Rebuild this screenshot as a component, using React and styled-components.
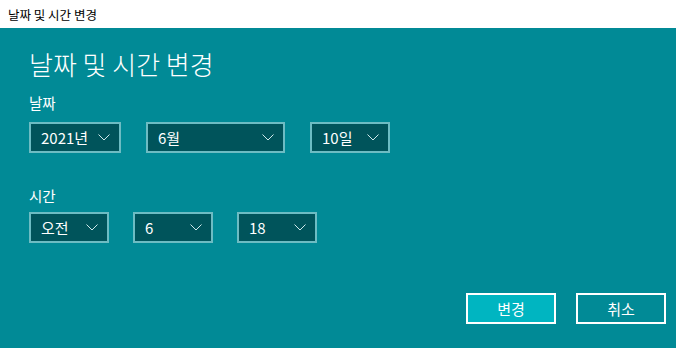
import React from 'react';
import styled, { createGlobalStyle } from 'styled-components';

const Global = createGlobalStyle`
  html, body {
    margin: 0;
    padding: 0;
    width: 676px;
    height: 348px;
    overflow: hidden;
    font-family: "Noto Sans CJK KR", "Noto Sans", sans-serif;
  }
`;

const Window = styled.div`
  width: 676px;
  height: 348px;
  display: flex;
  flex-direction: column;
  background: #018a96;
`;

const TitleBar = styled.div`
  height: 28px;
  background: #ffffff;
  color: #000;
  font-size: 12.5px;
  display: flex;
  align-items: center;
  padding-left: 8px;
`;

const Content = styled.div`
  flex: 1;
  display: flex;
  flex-direction: column;
  padding: 19px 10px 0 29px;
  color: #fff;
`;

const Heading = styled.h1`
  margin: 0;
  font-size: 26px;
  font-weight: 300;
  line-height: 34px;
`;

const Label = styled.div`
  font-size: 14.5px;
  line-height: 20px;
  margin-top: ${p => p.top}px;
`;

const Row = styled.div`
  display: flex;
  gap: ${p => p.gap}px;
  margin-top: ${p => p.top}px;
`;

const Select = styled.div`
  box-sizing: border-box;
  width: ${p => p.w}px;
  height: 31px;
  border: 2px solid #6dbcc3;
  background: #00545b;
  display: flex;
  align-items: center;
  justify-content: space-between;
  padding: 0 9px 0 10px;
  font-size: 15px;
  color: #fff;
`;

const Chevron = () => (
  <svg width="12" height="7" viewBox="0 0 12 7">
    <path d="M0.5 0.5 L6 6 L11.5 0.5" fill="none" stroke="#cfe8ea" strokeWidth="1" />
  </svg>
);

const Buttons = styled.div`
  display: flex;
  justify-content: flex-end;
  gap: 20px;
  margin-top: 50px;
`;

const Button = styled.button`
  box-sizing: border-box;
  width: 90px;
  height: 31px;
  border: 2px solid #ffffff;
  background: ${p => (p.primary ? '#00b5c1' : 'transparent')};
  color: #fff;
  font-family: inherit;
  font-size: 15px;
  padding: 0;
`;

const Dropdown = ({ w, value }) => (
  <Select w={w}>
    <span>{value}</span>
    <Chevron />
  </Select>
);

export default function App() {
  return (
    <Window>
      <Global />
      <TitleBar>날짜 및 시간 변경</TitleBar>
      <Content>
        <Heading>날짜 및 시간 변경</Heading>
        <Label top={12}>날짜</Label>
        <Row top={9} gap={25}>
          <Dropdown w={92} value="2021년" />
          <Dropdown w={139} value="6월" />
          <Dropdown w={80} value="10일" />
        </Row>
        <Label top={33}>시간</Label>
        <Row top={6} gap={24}>
          <Dropdown w={80} value="오전" />
          <Dropdown w={80} value="6" />
          <Dropdown w={80} value="18" />
        </Row>
        <Buttons>
          <Button primary>변경</Button>
          <Button>취소</Button>
        </Buttons>
      </Content>
    </Window>
  );
}
